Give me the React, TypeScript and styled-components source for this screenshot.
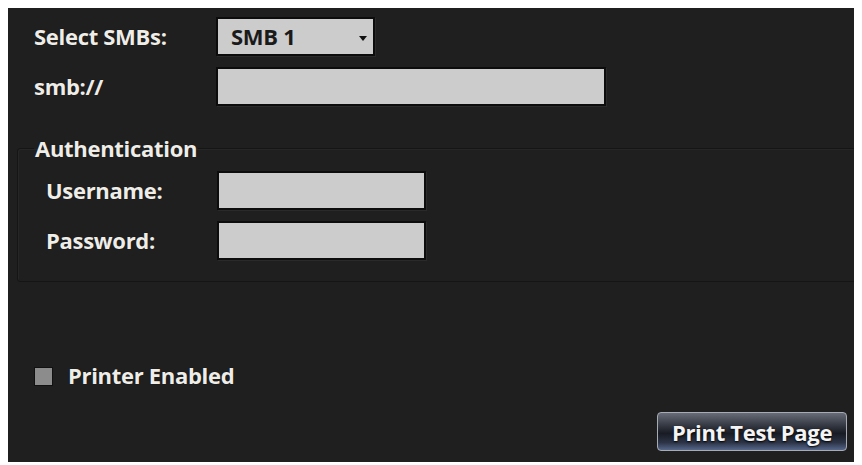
import styled, { createGlobalStyle } from "styled-components";

const GlobalStyle = createGlobalStyle`
	body {
		margin: 8px;
		background: #ffffff;
		font-family: "Open Sans", "DejaVu Sans", sans-serif;
	}
`;

const App = () => {
	return (
		<>
			<GlobalStyle />
			<Panel>
				<Rows>
					<Row>
						<Label>Select SMBs:</Label>
						<Select>
							<SelectText>SMB 1</SelectText>
							<Arrow />
						</Select>
					</Row>
					<Row>
						<Label>smb://</Label>
						<Field width={390} />
					</Row>
				</Rows>

				<Group>
					<Legend>Authentication</Legend>
					<Rows>
						<Row indent={11}>
							<Label>Username:</Label>
							<Field width={209} />
						</Row>
						<Row indent={11}>
							<Label>Password:</Label>
							<Field width={209} />
						</Row>
					</Rows>
				</Group>

				<CheckRow>
					<Box />
					<Label>Printer Enabled</Label>
				</CheckRow>

				<Footer>
					<Button>Print Test Page</Button>
				</Footer>
			</Panel>
		</>
	);
};

export default App;

//STYLES
const Panel = styled.div`
	width: 850px;
	height: 454px;
	background: #1f1f1f;
	display: flex;
	flex-direction: column;
	box-sizing: border-box;
	padding: 9px 0 0 0;
`;

const Rows = styled.div`
	display: flex;
	flex-direction: column;
	gap: 11px;
`;

const Row = styled.div<{ indent?: number }>`
	display: grid;
	grid-template-columns: ${(p) => 182 - (p.indent ?? 0)}px auto;
	align-items: center;
	height: 39px;
	padding-left: ${(p) => 26 + (p.indent ?? 0)}px;
`;

const Label = styled.span`
	color: #efede8;
	font-weight: 700;
	font-size: 22px;
	letter-spacing: -0.3px;
	line-height: 26px;
	text-shadow: 0 0 1px rgba(0, 0, 0, 0.7);
	white-space: nowrap;
	margin-top: -2px;
`;

const Field = styled.div<{ width: number }>`
	width: ${(p) => p.width}px;
	height: 39px;
	box-sizing: border-box;
	background: #cccccc;
	border: 2px solid #0c0c0c;
	box-shadow: 1px 1px 0 #2a2a2a;
`;

const Select = styled(Field).attrs({ width: 159 })`
	display: flex;
	align-items: center;
	justify-content: space-between;
	padding: 0 6px 0 13px;
`;

const SelectText = styled.span`
	color: #1a1a1a;
	font-weight: 700;
	font-size: 22px;
	letter-spacing: -0.3px;
	line-height: 26px;
	margin-top: -2px;
`;

const Arrow = styled.span`
	width: 0;
	height: 0;
	border-left: 4px solid transparent;
	border-right: 4px solid transparent;
	border-top: 5px solid #111111;
	margin-top: 4px;
`;

const Group = styled.fieldset`
	margin: 31px 2px 0 9px;
	padding: 0 0 21px 0;
	border: 1px solid #151515;
	border-radius: 3px;
	box-shadow: inset 1px 1px 0 #262626;
	min-width: 0;

	& > div {
		margin-top: 12px;
		margin-left: -9px;
	}
`;

const Legend = styled.legend`
	margin-left: 16px;
	padding: 0 1px;
	line-height: 22px;
	color: #efede8;
	font-weight: 700;
	font-size: 22px;
	letter-spacing: -0.3px;
	text-shadow: 0 0 1px rgba(0, 0, 0, 0.7);
`;

const CheckRow = styled.div`
	display: flex;
	align-items: center;
	gap: 15px;
	margin-top: 81px;
	padding-left: 26px;
	height: 26px;
`;

const Box = styled.span`
	width: 19px;
	height: 19px;
	box-sizing: border-box;
	background: #8c8c8c;
	border: 1px solid #111111;
`;

const Footer = styled.div`
	display: flex;
	justify-content: flex-end;
	margin-top: 23px;
	padding-right: 11px;
`;

const Button = styled.button`
	width: 190px;
	height: 39px;
	border: 1px solid #a7abb4;
	border-radius: 4px;
	background: linear-gradient(
		to bottom,
		#676c78 0%,
		#3a3e48 30%,
		#181b23 55%,
		#2c3446 80%,
		#56678a 100%
	);
	color: #f4f4f4;
	font-family: "Open Sans", "DejaVu Sans", sans-serif;
	font-weight: 700;
	font-size: 22px;
	letter-spacing: -0.3px;
	text-shadow: 0 1px 2px #000000;
	cursor: pointer;
	padding: 0;
`;
